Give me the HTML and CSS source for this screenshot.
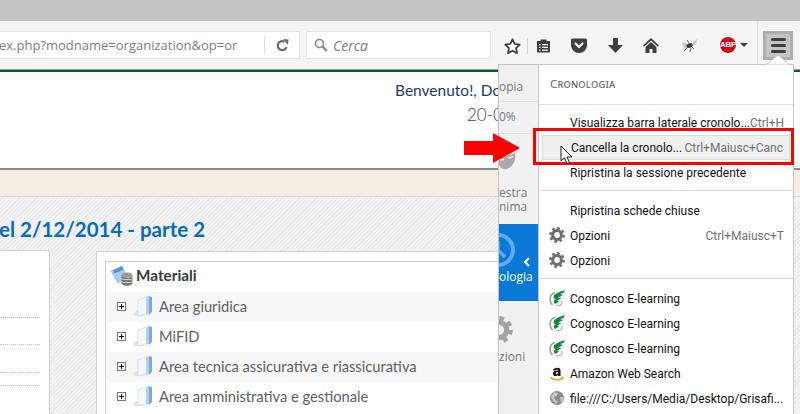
FILE: index.html
```html
<!DOCTYPE html>
<html lang="it">
<head>
<meta charset="utf-8">
<title>Cronologia</title>
<link rel="stylesheet" href="styles.css">
</head>
<body>
<svg class="defs" width="0" height="0" aria-hidden="true">
  <defs>
    <symbol id="gear" viewBox="0 0 16 16">
      <circle cx="8" cy="8" r="4.4" fill="none" stroke="#6f6f6f" stroke-width="3"/>
      <circle cx="8" cy="8" r="6.6" fill="none" stroke="#6f6f6f" stroke-width="2.6" stroke-dasharray="2.6 2.58"/>
    </symbol>
    <symbol id="cognosco" viewBox="0 0 16 16">
      <path d="M6 2.500C2.500 3.500 1 6 1 9c0 2.500 1 4.500 2.500 6" fill="none" stroke="#a0a0a0" stroke-width="1.700"/>
      <path d="M12.500 11c1 2 .5 3.500-1.500 4.500H7" fill="none" stroke="#bdbdbd" stroke-width="1.300"/>
      <path d="M5 5L10 2l6-2-1.500 3-3.500 1L14 5 9 8l3.500 0L8 11l2.500 .5L6 14 4.500 11.500 6.500 9 4.500 8z" fill="#16883e"/>
    </symbol>
    <symbol id="folder" viewBox="0 0 21 22">
      <path d="M1 19l3-3h8v5H3z" fill="#e4e4e4"/>
      <path d="M6 5l11-4v17l-11 3z" fill="#f4f7fb" stroke="#d5d9de" stroke-width=".7"/>
      <path d="M17 1l3 1v15l-3 3z" fill="#7fa9d8"/>
      <path d="M14 2.500l3-1.300v17.500l-3 1z" fill="#b5cfeb"/>
    </symbol>
    <symbol id="plus" viewBox="0 0 9 9">
      <rect x=".5" y=".5" width="8" height="8" fill="#fff" stroke="#777"/>
      <path d="M2 4.500h5M4.500 2v5" stroke="#000"/>
    </symbol>
  </defs>
</svg>

<div class="tabstrip"></div>

<header class="navbar">
  <div class="urlbar">
    <span class="urltext">ex.php?modname=organization&amp;op=or</span>
    <span class="urlsep"></span>
    <svg class="reload" width="13" height="13" viewBox="0 0 13 13"><path d="M10.500 8.200A4.500 4.500 0 1 1 8.500 2.700" fill="none" stroke="#6a6a6a" stroke-width="2.200"/><path d="M7 0l5.500 .5L12 6z" fill="#6a6a6a"/></svg>
  </div>
  <div class="searchbar">
    <svg width="14" height="14" viewBox="0 0 14 14"><circle cx="5.500" cy="5.500" r="4" fill="none" stroke="#8a8a8a" stroke-width="1.700"/><path d="M8.500 8.500l4.300 4.300" stroke="#8a8a8a" stroke-width="2.400"/></svg>
    <span class="searchtext">Cerca</span>
  </div>
  <div class="tools">
    <svg class="star" width="17" height="16" viewBox="0 0 17 16"><path d="M8.500 1.300l2.200 4.600 5 .7-3.600 3.500.9 5-4.500-2.400-4.500 2.400.9-5L1.300 6.600l5-.7z" fill="#fff" stroke="#3f3f3f" stroke-width="1.800" stroke-linejoin="round"/></svg>
    <span class="toolsep"></span>
    <svg class="clip" width="15" height="15" viewBox="0 0 15 15"><path d="M1 3h3.500V1.500h6V3H14v10.500a1 1 0 0 1-1 1H2a1 1 0 0 1-1-1z" fill="#3f3f3f"/><path d="M3 6h1.500v1.300H3zM6 6h6v1.300H6zM3 8.800h1.500v1.300H3zM6 8.800h6v1.300H6zM3 11.500h1.500v1.300H3zM6 11.500h6v1.300H6z" fill="#f5f5f5"/></svg>
    <svg class="pocket" width="16" height="15" viewBox="0 0 16 15"><path d="M1.500 .5h13A1.500 1.500 0 0 1 16 2v5.500a8 7.500 0 0 1-16 0V2A1.500 1.500 0 0 1 1.500 .5z" fill="#3f3f3f"/><path d="M4.500 5.500L8 9l3.500-3.500" fill="none" stroke="#f5f5f5" stroke-width="2.200" stroke-linecap="round"/></svg>
    <svg class="down" width="15" height="15" viewBox="0 0 15 15"><path d="M5 0h5v7h5l-7.500 8L0 7h5z" fill="#3f3f3f"/></svg>
    <svg class="home" width="16" height="15" viewBox="0 0 16 15"><path d="M8 0l8 7.500-1 1.200L8 2.500 1 8.700 0 7.500z" fill="#3f3f3f"/><path d="M8 4l5.500 5v6H9.500v-4h-3v4H2.500V9z" fill="#3f3f3f"/></svg>
    <svg class="fly" width="17" height="15" viewBox="0 0 17 15"><path d="M1 4l6 2 1 4-5 1z" fill="#c9c9c9"/><path d="M16 1l-5 3-1 5 5-2z" fill="#d2d2d2"/><ellipse cx="8.500" cy="7.500" rx="3.200" ry="2.200" fill="#3a3a3a" transform="rotate(-25 8.500 7.500)"/><path d="M3 13l3-3M9 14l1-4M13 11l-2-2M6 2l2 3" stroke="#666" stroke-width="1"/></svg>
    <span class="abp">
      <span class="abpbadge">ABP</span>
      <span class="caret"></span>
    </span>
    <span class="toolsep tall"></span>
    <button class="hamburger" type="button" aria-label="Menu"><span></span><span></span><span></span></button>
  </div>
</header>

<main class="page">
  <div class="greenline"></div>
  <section class="welcome">
    <p class="hello">Benvenuto!, Do</p>
    <p class="date">20-0</p>
  </section>
  <div class="beige"></div>
  <section class="hatch">
    <h1 class="title">el 2/12/2014 - parte 2</h1>
    <div class="columns">
      <div class="leftcard">
        <i class="dots d1"></i><i class="dots d2"></i><i class="dots d3"></i><i class="dots d4"></i>
      </div>
      <div class="rightcard">
        <div class="materials">
          <div class="mathead">
            <svg width="23" height="21" viewBox="0 0 23 21"><path d="M1 6l11-5 5 11-9 6z" fill="#a9cdf0" stroke="#8fb0cf" stroke-width=".7"/><path d="M3 5.500l9-4 1.500 3-9 4z" fill="#4f93d8"/><ellipse cx="17" cy="10" rx="5.500" ry="2.500" fill="#9b9b9b"/><path d="M11.500 10v8c0 1.500 2.500 2.700 5.500 2.700s5.500-1.200 5.500-2.700v-8c0 1.500-2.500 2.700-5.500 2.700s-5.500-1.200-5.500-2.700z" fill="#777"/><path d="M11.500 13.500c1 1.500 10 1.500 11 0M11.500 16.500c1 1.500 10 1.500 11 0" stroke="#ddd" fill="none"/></svg>
            <strong>Materiali</strong>
          </div>
          <div class="matrow"><svg class="plus"><use href="#plus"/></svg><svg class="folder"><use href="#folder"/></svg><span>Area giuridica</span></div>
          <div class="matrow"><svg class="plus"><use href="#plus"/></svg><svg class="folder"><use href="#folder"/></svg><span>MiFID</span></div>
          <div class="matrow"><svg class="plus"><use href="#plus"/></svg><svg class="folder"><use href="#folder"/></svg><span>Area tecnica assicurativa e riassicurativa</span></div>
          <div class="matrow"><svg class="plus"><use href="#plus"/></svg><svg class="folder"><use href="#folder"/></svg><span>Area amministrativa e gestionale</span></div>
        </div>
      </div>
    </div>
  </section>
</main>

<aside class="subview">
  <div class="sub-copy">opia</div>
  <div class="sub-zoom">0%</div>
  <div class="sub-private">
    <svg class="mask" width="20" height="20" viewBox="0 0 20 20"><path d="M0 3c5 2 12 1 19-2 1 6-1 13-8 16C6 19 1 12 0 3z" fill="#a9a9a9"/><path d="M3 7c2 1 4 1 5 0M12 6c2 0 4-1 5-2" stroke="#f0f0f0" stroke-width="1.600" fill="none"/></svg>
    <span>estra</span>
    <span>nima</span>
  </div>
  <div class="sub-history">
    <svg class="clock" width="36" height="36" viewBox="0 0 36 36"><circle cx="14" cy="18" r="15" fill="none" stroke="#62abea" stroke-width="4"/><path d="M14 9v9l7 7" fill="none" stroke="#62abea" stroke-width="3.500"/></svg>
    <svg class="chev" width="8" height="10" viewBox="0 0 8 10"><path d="M6 1L2 5l4 4" fill="none" stroke="#fff" stroke-width="2"/></svg>
    <span>ologia</span>
  </div>
  <div class="sub-options">
    <svg width="28" height="28"><use href="#gear"/></svg>
    <span>zioni</span>
  </div>
</aside>

<nav class="menu">
  <h2 class="menuhead">Cronologia</h2>
  <ul class="group">
    <li class="item"><span class="label">Visualizza barra laterale cronolo...</span><span class="key">Ctrl+H</span></li>
    <li class="item hover"><span class="label">Cancella la cronolo...</span><span class="key">Ctrl+Maiusc+Canc</span></li>
    <li class="item"><span class="label">Ripristina la sessione precedente</span></li>
  </ul>
  <ul class="group">
    <li class="item"><span class="label">Ripristina schede chiuse</span></li>
    <li class="item"><svg class="ico"><use href="#gear"/></svg><span class="label">Opzioni</span><span class="key">Ctrl+Maiusc+T</span></li>
    <li class="item"><svg class="ico"><use href="#gear"/></svg><span class="label">Opzioni</span></li>
  </ul>
  <ul class="group last">
    <li class="item"><svg class="ico"><use href="#cognosco"/></svg><span class="label">Cognosco E-learning</span></li>
    <li class="item"><svg class="ico"><use href="#cognosco"/></svg><span class="label">Cognosco E-learning</span></li>
    <li class="item"><svg class="ico"><use href="#cognosco"/></svg><span class="label">Cognosco E-learning</span></li>
    <li class="item"><svg class="ico" viewBox="0 0 16 16"><path d="M4 5.500C4.500 2.500 11.500 1.500 11.500 5.500V11H9.300l-.2-.9C7.300 11.800 4 11.300 4 8.500c0-2.500 3-2.900 5-3 0-1.500-2.200-1.500-2.500 0zM9 7.200c-1.200 0-2.400.3-2.400 1.300 0 1 1.800 1.100 2.400-.2z" fill="#111" fill-rule="evenodd"/><path d="M1.500 12.500c4 3 9 3 12.500.5" fill="none" stroke="#f29a1f" stroke-width="1.600"/><path d="M12 12.200l2.300-.2-.6 2.200" fill="none" stroke="#f29a1f" stroke-width="1"/></svg><span class="label">Amazon Web Search</span></li>
    <li class="item"><svg class="ico" viewBox="0 0 16 16"><circle cx="8" cy="8" r="7" fill="#8c8c8c"/><path d="M5 2l4 1-1 3-3 1 1 3 3 1-2 3-3-3-2-4zM11 7l3 0 0 4-2 2z" fill="#c6c6c6"/></svg><span class="label">file:///C:/Users/Media/Desktop/Grisafi...</span></li>
  </ul>
</nav>
<svg class="menuarrow" width="24" height="10" viewBox="0 0 24 10"><path d="M0 10L12 0l12 10z" fill="#fff" stroke="#c8c8c8"/></svg>

<div class="redbox"></div>
<svg class="redarrow" width="57" height="30" viewBox="0 0 57 30"><path d="M0 8h29V0l27 15-27 15v-8H0z" fill="#f00"/></svg>
<svg class="cursor" width="14" height="20" viewBox="0 0 14 20"><path d="M1 1v15l3.500-3.200 2.500 5.700 2.500-1-2.500-5.500h5z" fill="#fff" stroke="#1c2030" stroke-width="1"/></svg>
</body>
</html>
```
FILE: styles.css
```css
* { box-sizing: border-box; }
html, body { margin: 0; padding: 0; width: 800px; height: 414px; overflow: hidden; background: #fff; }
body { font-family: "Lato", sans-serif; position: relative; }
.defs { position: absolute; }
ul { list-style: none; margin: 0; padding: 0; }
h1, h2, p { margin: 0; }

.tabstrip { height: 21px; background: #c4c4c4; }

.navbar { height: 48px; background: #f5f5f5; display: flex; align-items: flex-start; padding-top: 10px; }
.urlbar { width: 300px; height: 28px; background: #fff; border: 1px solid #e3e3e3; border-left: 0; display: flex; align-items: center; overflow: hidden; }
.urltext { width: 240px; flex: none; font: 13px "Open Sans", sans-serif; color: #7d7d7d; white-space: nowrap; margin-left: -1px; }
.urlsep { width: 1px; height: 18px; background: #e0e0e0; margin-left: 25px; flex: none; }
.reload { margin-left: 11px; flex: none; }
.searchbar { width: 185px; height: 28px; margin-left: 6px; background: #fff; border: 1px solid #e3e3e3; display: flex; align-items: center; padding-left: 7px; gap: 5px; }
.searchtext { font: italic 14px "Open Sans", sans-serif; color: #7d7d7d; }

.tools { flex: 1; display: flex; align-items: flex-start; position: relative; height: 38px; }
.star { margin: 7px 0 0 13px; }
.toolsep { width: 1px; height: 16px; background: #d5d5d5; margin: 7px 0 0 6px; }
.toolsep.tall { height: 43px; margin: -10px 0 0 0; background: #dcdcdc; position: absolute; left: 266px; top: 0; }
.clip { margin: 7px 0 0 8px; }
.pocket { margin: 7px 0 0 20px; }
.down { margin: 7px 0 0 21px; }
.home { margin: 7px 0 0 20px; }
.fly { margin: 7px 0 0 22px; }
.abp { display: flex; align-items: center; gap: 4px; margin: 6px 0 0 22px; }
.abpbadge { width: 16px; height: 16px; border-radius: 50%; background: #c70d13; color: #fff; font: bold 8px/16px "Liberation Sans", sans-serif; text-align: center; letter-spacing: -.3px; }
.caret { width: 0; height: 0; border: 4px solid transparent; border-top: 4px solid #3f3f3f; border-bottom: 0; }
.hamburger { position: absolute; left: 272px; top: 0; width: 30px; height: 29px; padding: 0; border: 3px solid #adadad; background: #c4c4c4; display: flex; flex-direction: column; align-items: center; justify-content: center; gap: 3px; }
.hamburger span { width: 15px; height: 3px; border-radius: 1.500px; background: #3f3f3f; }

.page { height: 345px; overflow: hidden; }
.greenline { height: 3px; border-top: 1px solid #9a9a9a; background: #0a5c2e; }
.welcome { height: 98px; background: #fff; padding: 8px 0 0 395px; border-bottom: 2px solid #8a8a8a; }
.hello { font-size: 15.500px; line-height: 20px; color: #1a3a6b; white-space: nowrap; }
.date { font-size: 17px; font-weight: 300; line-height: 20px; margin: 5px 0 0 72px; color: #444; }
.beige { height: 27px; background: #f4ede4; border-bottom: 1px solid #d5d5d5; }
.hatch { height: 217px; background: repeating-linear-gradient(135deg, #f3f3f3 0 2px, #e9e9e9 2px 3px); }
.title { font-size: 20.500px; font-weight: 700; color: #0a6cb8; line-height: 26px; padding-top: 19px; height: 53px; margin-left: -1px; white-space: nowrap; }
.columns { display: flex; align-items: flex-start; gap: 46px; }
.leftcard { width: 50px; height: 170px; background: #fff; border: 1px solid #cfcfcf; border-left: 0; position: relative; flex: none; }
.dots { display: block; height: 0; width: 40px; border-top: 1px dotted #c4c4c4; position: absolute; left: 0; }
.d1 { top: 66px; } .d2 { top: 93px; } .d3 { top: 121px; } .d4 { top: 134px; }
.rightcard { width: 500px; height: 170px; margin-top: 1px; background: #fff; border: 1px solid #cfcfcf; padding: 9px 0 0 8px; flex: none; }
.materials { border: 1px solid #cfcfcf; height: 170px; }
.mathead { height: 30px; display: flex; align-items: center; padding: 0 0 4px 4px; gap: 3px; }
.mathead strong { font-size: 15.300px; font-weight: 700; color: #3b3b3b; }
.matrow { height: 30px; display: flex; align-items: center; padding: 0 0 2px 11px; background: #fff; font-size: 14.700px; color: #606060; white-space: nowrap; }
.matrow:nth-child(even) { background: #f7f7f7; }
.plus { width: 9px; height: 9px; flex: none; }
.folder { width: 21px; height: 22px; margin: 0 6px; flex: none; }

.subview { position: absolute; left: 498px; top: 64px; width: 41px; height: 350px; background: #f1f1f1; border-left: 1px solid #c4c4c4; border-top: 1px solid #c4c4c4; overflow: hidden; font: 12px "Open Sans", sans-serif; color: #777; }
.sub-copy { height: 37px; padding-top: 14px; border-bottom: 1px solid #e0e0e0; line-height: 16px; }
.sub-zoom { height: 32px; padding-top: 7px; border-bottom: 1px solid #e0e0e0; line-height: 16px; }
.sub-private { height: 90px; padding-top: 18px; display: flex; flex-direction: column; line-height: 14px; }
.mask { margin: 0 0 14px -3px; flex: none; }
.sub-history { height: 77px; background: #0978d6; position: relative; color: #fff; }
.clock { position: absolute; left: -15px; top: 8px; }
.chev { position: absolute; left: 24px; top: 33px; }
.sub-history span { position: absolute; left: 0; top: 45px; line-height: 16px; }
.sub-options { padding-top: 15px; display: flex; flex-direction: column; }
.sub-options svg { margin-left: -14px; opacity: .6; }
.sub-options span { margin-top: 5px; line-height: 16px; }

.menu { position: absolute; left: 538px; top: 64px; width: 256px; height: 350px; background: #fff; border-left: 1px solid #c8c8c8; border-right: 1px solid #c8c8c8; border-top: 1px solid #c8c8c8; font: 12px "Roboto", sans-serif; color: #111; }
.menuhead { height: 40px; padding: 11px 0 0 11px; font: 400 11.500px/16px "Noto Sans", sans-serif; font-variant: small-caps; color: #5f6670; letter-spacing: .2px; border-bottom: 1px solid #e0e0e0; }
.group { padding: 7px 0 5px; border-bottom: 1px solid #e0e0e0; }
.group:first-of-type { padding-top: 5px; }
.group.last { border-bottom: 0; }
.item { height: 25px; display: flex; align-items: center; padding: 0 9px 0 31px; position: relative; white-space: nowrap; }
.item .label { flex: 1; }
.key { color: #6e7278; }
.item.hover { margin: 0 3px; padding: 0 6px 0 28px; background: #f0f0f0; border: 1px solid #dcdcdc; }
.ico { position: absolute; left: 10px; top: 4px; width: 16px; height: 16px; }

.menuarrow { position: absolute; left: 766px; top: 55px; }
.redbox { position: absolute; left: 533px; top: 128px; width: 261px; height: 37px; border: 3px solid #f00; }
.redarrow { position: absolute; left: 464px; top: 133px; }
.cursor { position: absolute; left: 560px; top: 145px; }
```
